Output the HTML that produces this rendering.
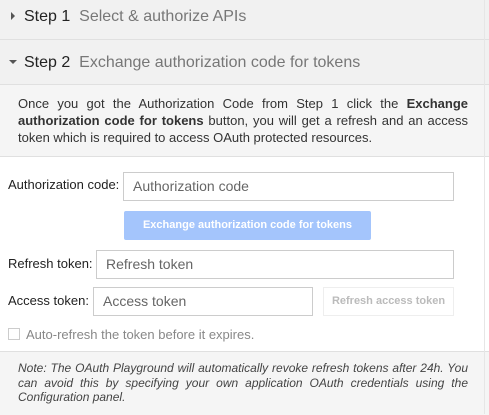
<html><head><style>
body{margin:0;width:489px;height:414px;overflow:hidden;font-family:"Liberation Sans",Arial,sans-serif;background:#fff;position:relative}
.a{position:absolute}
.h{left:0;width:489px;background:#f1f1f1;border-bottom:1px solid #e0e0e0}
.st{font-size:16px;color:#222}
.sub{color:#777}
.in{position:absolute;border:1px solid #ccc;box-sizing:border-box;background:#fff;font-size:14px;color:#666;padding-left:9px;line-height:26px}
.lb{position:absolute;font-size:13px;color:#222}
</style></head><body>
<div class="a h" style="top:0;height:39px"></div>
<div class="a" style="left:11px;top:12px;width:0;height:0;border-left:4px solid #555;border-top:4px solid transparent;border-bottom:4px solid transparent"></div>
<div class="a st" style="left:24px;top:8px">Step 1&nbsp;&nbsp;<span class="sub">Select &amp; authorize APIs</span></div>
<div class="a h" style="top:40px;height:44px"></div>
<div class="a" style="left:9px;top:60px;width:0;height:0;border-top:4px solid #555;border-left:4px solid transparent;border-right:4px solid transparent"></div>
<div class="a st" style="left:24px;top:54px">Step 2&nbsp;&nbsp;<span class="sub">Exchange authorization code for tokens</span></div>
<div class="a" style="left:0;top:85px;width:489px;height:71px;background:#f5f5f5;border-bottom:1px solid #e0e0e0"></div>
<div class="a" style="left:18px;top:95px;width:450px;font-size:13px;line-height:17px;color:#333;text-align:justify;text-align-last:left">Once you got the Authorization Code from Step 1 click the <b>Exchange authorization code for tokens</b> button, you will get a refresh and an access token which is required to access OAuth protected resources.</div>
<div class="lb" style="left:8px;top:177px">Authorization code:</div>
<div class="in" style="left:123px;top:172px;width:331px;height:29px">Authorization code</div>
<div class="a" style="left:124px;top:211px;width:247px;height:29px;background:#a4c5fc;border-radius:2px;color:#fff;font-weight:bold;font-size:11px;text-align:center;line-height:29px">Exchange authorization code for tokens</div>
<div class="lb" style="left:8px;top:256px">Refresh token:</div>
<div class="in" style="left:96px;top:250px;width:358px;height:29px">Refresh token</div>
<div class="lb" style="left:8px;top:293px">Access token:</div>
<div class="in" style="left:93px;top:287px;width:220px;height:29px">Access token</div>
<div class="a" style="left:323px;top:287px;width:131px;height:29px;border:1px solid #eee;box-sizing:border-box;color:#bbb;font-weight:bold;font-size:11px;text-align:center;line-height:27px">Refresh access token</div>
<div class="a" style="left:8px;top:328px;width:12px;height:12px;border:1px solid #ccc;box-sizing:border-box"></div>
<div class="a" style="left:26px;top:327px;font-size:13px;color:#888">Auto-refresh the token before it expires.</div>
<div class="a" style="left:0;top:351px;width:489px;height:63px;background:#f5f5f5;border-top:1px solid #e0e0e0"></div>
<div class="a" style="left:18px;top:361px;width:450px;font-size:12px;line-height:14.5px;color:#444;font-style:italic;text-align:justify;text-align-last:left">Note: The OAuth Playground will automatically revoke refresh tokens after 24h. You can avoid this by specifying your own application OAuth credentials using the Configuration panel.</div>
<div class="a" style="left:484px;top:0;width:1px;height:414px;background:#e6e6e6"></div>
</body></html>
